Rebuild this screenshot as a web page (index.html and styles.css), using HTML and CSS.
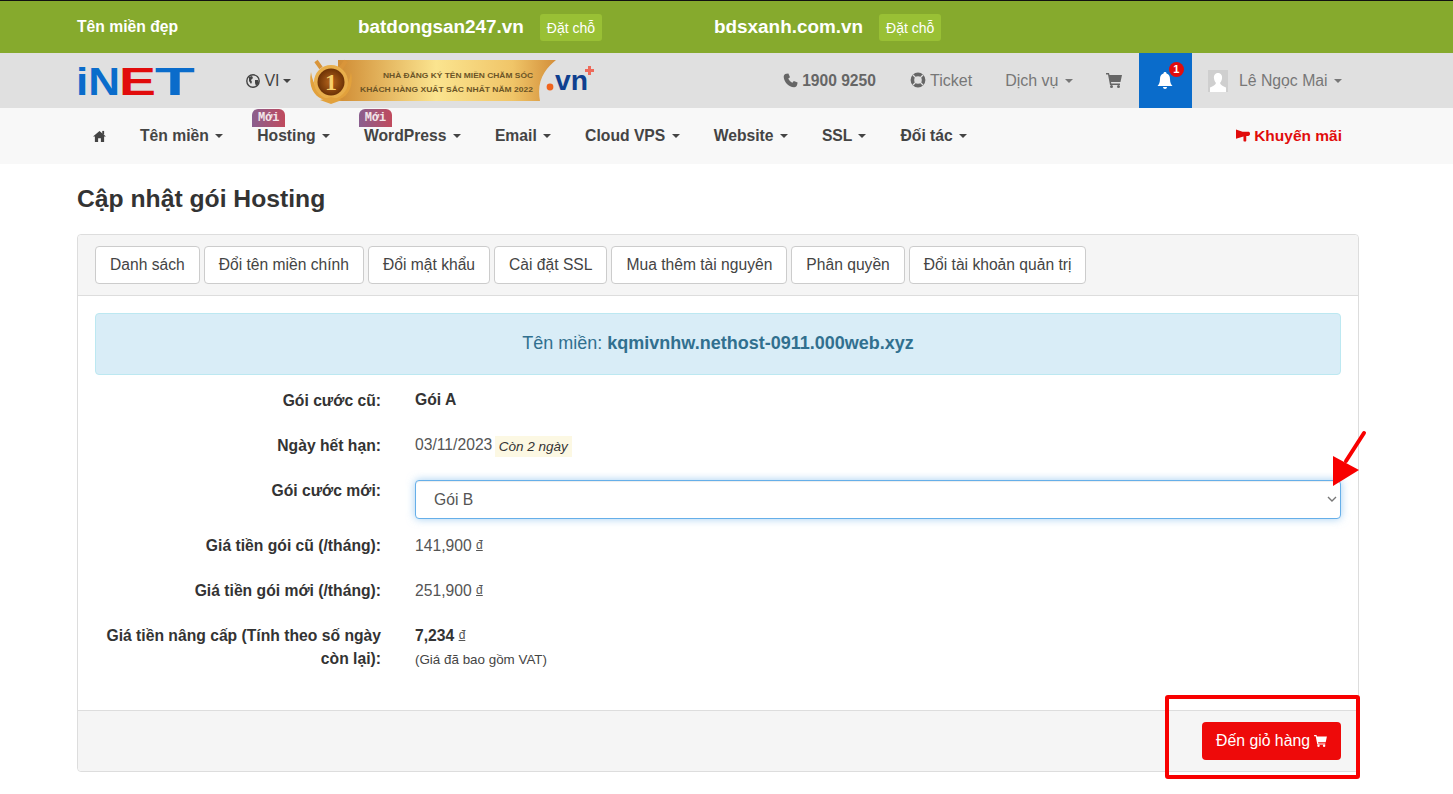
FILE: index.html
```html
<!DOCTYPE html>
<html lang="vi">
<head>
    <meta charset="UTF-8" />
    <meta name="viewport" content="width=device-width, initial-scale=1.0"/>
    <title>Cập nhật gói Hosting</title>
    <link rel="stylesheet" href="styles.css">
</head>
<body>

<!-- Thanh tên miền đẹp -->
<div class="promo-bar">
    <div class="promo-title">Tên miền đẹp</div>
    <div class="promo-item">
        <span class="promo-domain">batdongsan247.vn</span>
        <a class="promo-btn">Đặt chỗ</a>
    </div>
    <div class="promo-item">
        <span class="promo-domain">bdsxanh.com.vn</span>
        <a class="promo-btn">Đặt chỗ</a>
    </div>
</div>

<!-- Thanh logo -->
<div class="top-bar">
    <svg class="logo" width="120" height="46" viewBox="0 0 120 46">
        <text x="-1" y="37" font-family="Liberation Sans" font-weight="700" font-size="39" textLength="44" lengthAdjust="spacingAndGlyphs" fill="#0a6ccb">iN</text>
        <text x="42" y="37" font-family="Liberation Sans" font-weight="700" font-size="39" textLength="37" lengthAdjust="spacingAndGlyphs" fill="#e10c0c">E</text>
        <text x="78" y="37" font-family="Liberation Sans" font-weight="700" font-size="39" textLength="40" lengthAdjust="spacingAndGlyphs" fill="#0a6ccb">T</text>
    </svg>

    <a class="lang">
        <svg class="ico" width="14" height="14" viewBox="0 0 14 14">
            <circle cx="7" cy="7" r="6.2" fill="none" stroke="#444" stroke-width="1.4"/>
            <path d="M3 3l3-1 1 2-2 2 1 2-1 2-2-3zM9 6l3 0 1 3-3 3-1-3z" fill="#444"/>
        </svg>
        VI <span class="caret"></span>
    </a>

    <svg class="banner" width="288" height="46" viewBox="0 0 288 46">
        <defs>
            <linearGradient id="ribbon" x1="0" y1="0" x2="1" y2="0">
                <stop offset="0" stop-color="#d08c34"/>
                <stop offset="0.45" stop-color="#fbe48f"/>
                <stop offset="0.8" stop-color="#f0c568"/>
                <stop offset="1" stop-color="#d38f3a"/>
            </linearGradient>
            <radialGradient id="medal">
                <stop offset="0" stop-color="#b8661c"/>
                <stop offset="1" stop-color="#6c3206"/>
            </radialGradient>
        </defs>
        <path d="M30 2H248C238 10 228 22 232 43H30Z" fill="url(#ribbon)"/>
        <path d="M3 14C0 28 6 38 14 41L32 41C40 38 46 28 43 14C41 28 34 37 23 37C12 37 5 28 3 14Z" fill="#e2a13c"/>
        <path d="M8 3L13 10M38 3L33 10" stroke="#d9953a" stroke-width="4"/>
        <circle cx="23" cy="24" r="17" fill="#e8ae4b"/>
        <circle cx="23" cy="24" r="13.5" fill="url(#medal)"/>
        <text x="23" y="32" text-anchor="middle" font-family="Liberation Serif" font-weight="700" font-size="24" fill="#f7cf6b">1</text>
        <path d="M12 42L23 46L34 42L23 39Z" fill="#e2a13c"/>
        <text x="225" y="20" text-anchor="end" font-family="Liberation Sans" font-weight="700" font-size="8" textLength="150" lengthAdjust="spacingAndGlyphs" fill="#6b5426">NHÀ ĐĂNG KÝ TÊN MIỀN CHĂM SÓC</text>
        <text x="225" y="34" text-anchor="end" font-family="Liberation Sans" font-weight="700" font-size="8" textLength="173" lengthAdjust="spacingAndGlyphs" fill="#6b5426">KHÁCH HÀNG XUẤT SẮC NHẤT NĂM 2022</text>
        <circle cx="242" cy="29" r="3.4" fill="#f0641e"/>
        <text x="247" y="32" font-family="Liberation Sans" font-weight="700" font-size="27" textLength="33" lengthAdjust="spacingAndGlyphs" fill="#0f3f8f">vn</text>
        <path d="M280 8h3v3h3v3h-3v3h-3v-3h-3v-3h3z" fill="#ee6a5a"/>
    </svg>

    <div class="top-right">
        <a class="top-link phone">
            <svg class="ico" width="15" height="15" viewBox="0 0 15 15">
                <path d="M3.4 .8L5.4 .4L7 4.2L5.3 5.6C6 7.4 7.6 9 9.4 9.7L10.8 8L14.6 9.6L14.2 11.6C14 13.2 12.6 14.4 11 14.3C5.6 13.8 1.2 9.4 .7 4C.6 2.4 1.8 1 3.4 .8Z" fill="#666"/>
            </svg>
            1900 9250
        </a>
        <a class="top-link ticket">
            <svg class="ico" width="16" height="16" viewBox="0 0 16 16">
                <circle cx="8" cy="8" r="5.6" fill="none" stroke="#666" stroke-width="3.6"/>
                <path d="M3 3l3 3M13 3l-3 3M3 13l3-3M13 13l-3-3" stroke="#e0e0e0" stroke-width="1.2"/>
            </svg>
            Ticket
        </a>
        <a class="top-link service">Dịch vụ <span class="caret"></span></a>
        <a class="top-link cart">
            <svg width="16" height="15" viewBox="0 0 16 15">
                <path d="M0 0H3L3.5 2H16L14.5 9H5L5.3 10.5H14V12H4L2 1.5H0Z" fill="#666"/>
                <circle cx="5.5" cy="13.5" r="1.5" fill="#666"/>
                <circle cx="12.5" cy="13.5" r="1.5" fill="#666"/>
            </svg>
        </a>
        <a class="bell">
            <svg width="16" height="18" viewBox="0 0 16 18">
                <path d="M8 0C9 0 9.5 .6 9.5 1.4C12 2 13 4 13 7C13 10.5 14 12.5 15.5 14H.5C2 12.5 3 10.5 3 7C3 4 4 2 6.5 1.4C6.5 .6 7 0 8 0ZM6 15H10C10 16.2 9 17 8 17C7 17 6 16.2 6 15Z" fill="#fff"/>
            </svg>
            <span class="bell-count">1</span>
        </a>
        <a class="top-link user">
            <svg class="avatar" width="20" height="22" viewBox="0 0 20 22">
                <rect width="20" height="22" fill="#cfcfcf"/>
                <path d="M10 3C13 3 14.5 5.5 14 8.5C13.7 10.5 12.8 12 12 13C12.4 15 15 16 18 17.5V22H2V17.5C5 16 7.6 15 8 13C7.2 12 6.3 10.5 6 8.5C5.5 5.5 7 3 10 3Z" fill="#fff"/>
            </svg>
            <span>Lê Ngọc Mai <span class="caret"></span></span>
        </a>
    </div>
</div>

<!-- Menu chính -->
<div class="main-nav">
    <a class="nav-home">
        <svg width="13" height="12" viewBox="0 0 14 13">
            <path d="M7 1L14 7H12V13H8.5V9H5.5V13H2V7H0Z" fill="#444"/>
            <rect x="10" y="1" width="2" height="4" fill="#444"/>
        </svg>
    </a>
    <a class="nav-item">Tên miền <span class="caret"></span></a>
    <a class="nav-item"><span class="badge-new">Mới</span>Hosting <span class="caret"></span></a>
    <a class="nav-item"><span class="badge-new">Mới</span>WordPress <span class="caret"></span></a>
    <a class="nav-item">Email <span class="caret"></span></a>
    <a class="nav-item">Cloud VPS <span class="caret"></span></a>
    <a class="nav-item">Website <span class="caret"></span></a>
    <a class="nav-item">SSL <span class="caret"></span></a>
    <a class="nav-item">Đối tác <span class="caret"></span></a>
    <a class="nav-promo">
        <svg class="ico" width="14" height="14" viewBox="0 0 15 14">
            <path d="M0 0V10L8 7.6V12C8 13.2 11 13.2 11 12V7H13C14.2 7 15 6 15 4.6C15 3 14.2 2.4 13 2.4H7Z" fill="#e10c0c"/>
        </svg>
        Khuyến mãi
    </a>
</div>

<div class="container">
    <h1 class="page-title">Cập nhật gói Hosting</h1>

    <div class="panel">
        <div class="panel-heading">
            <a class="tab-btn">Danh sách</a>
            <a class="tab-btn">Đổi tên miền chính</a>
            <a class="tab-btn">Đổi mật khẩu</a>
            <a class="tab-btn">Cài đặt SSL</a>
            <a class="tab-btn">Mua thêm tài nguyên</a>
            <a class="tab-btn">Phân quyền</a>
            <a class="tab-btn">Đổi tài khoản quản trị</a>
        </div>

        <div class="panel-body">
            <div class="alert-info">Tên miền: <strong>kqmivnhw.nethost-0911.000web.xyz</strong></div>

            <div class="form-row">
                <div class="form-label">Gói cước cũ:</div>
                <div class="form-value"><strong>Gói A</strong></div>
            </div>
            <div class="form-row">
                <div class="form-label">Ngày hết hạn:</div>
                <div class="form-value">03/11/2023 <em class="days-left">Còn 2 ngày</em></div>
            </div>
            <div class="form-row row-select">
                <div class="form-label">Gói cước mới:</div>
                <div class="form-value select-wrap">
                    <select class="form-select">
                        <option>Gói B</option>
                    </select>
                    <svg class="select-arrow" width="10" height="6" viewBox="0 0 10 6">
                        <path d="M1 1L5 5L9 1" fill="none" stroke="#777" stroke-width="1.4"/>
                    </svg>
                </div>
            </div>
            <div class="form-row">
                <div class="form-label">Giá tiền gói cũ (/tháng):</div>
                <div class="form-value">141,900 <span class="currency">đ</span></div>
            </div>
            <div class="form-row">
                <div class="form-label">Giá tiền gói mới (/tháng):</div>
                <div class="form-value">251,900 <span class="currency">đ</span></div>
            </div>
            <div class="form-row row-last">
                <div class="form-label">Giá tiền nâng cấp (Tính theo số ngày còn lại):</div>
                <div class="form-value">
                    <strong>7,234</strong> <span class="currency">đ</span>
                    <div class="vat-note">(Giá đã bao gồm VAT)</div>
                </div>
            </div>
        </div>

        <div class="panel-footer">
            <a class="btn-cart">
                Đến giỏ hàng
                <svg width="13" height="12" viewBox="0 0 16 15">
                    <path d="M0 0H3L3.5 2H16L14.5 9H5L5.3 10.5H14V12H4L2 1.5H0Z" fill="#fff"/>
                    <circle cx="5.5" cy="13.5" r="1.5" fill="#fff"/>
                    <circle cx="12.5" cy="13.5" r="1.5" fill="#fff"/>
                </svg>
            </a>
        </div>
    </div>
</div>

<!-- Chú thích đỏ vẽ đè lên ảnh chụp -->
<svg class="mark-arrow" width="40" height="60" viewBox="0 0 40 60">
    <path d="M35 3L17 31" stroke="#f80000" stroke-width="4" stroke-linecap="round"/>
    <path d="M4 26L30 40L4 56Z" fill="#f80000"/>
</svg>
<div class="mark-box"></div>

</body>
</html>
```

FILE: styles.css
```css
html, body {
    margin: 0;
    padding: 0;
}

body {
    position: relative;
    height: 794px;
    overflow: hidden;
    font-family: "Liberation Sans", Arial, sans-serif;
    font-size: 14px;
    line-height: 20px;
    color: #333;
    background: #fff;
}

.caret {
    display: inline-block;
    width: 0;
    height: 0;
    margin-left: 2px;
    vertical-align: middle;
    border-top: 4px solid;
    border-left: 4px solid transparent;
    border-right: 4px solid transparent;
}

.ico {
    vertical-align: -2px;
}

/* Thanh tên miền đẹp */
.promo-bar {
    display: flex;
    align-items: center;
    height: 51px;
    padding: 0 0 1px 77px;
    background: #86aa2d;
    border-top: 1px solid #111;
    color: #fff;
}

.promo-title {
    width: 281px;
    font-size: 15.7px;
    font-weight: 700;
}

.promo-item {
    display: flex;
    align-items: center;
    gap: 16px;
    width: 356px;
}

.promo-domain {
    font-size: 18.9px;
    font-weight: 700;
}

.promo-btn {
    margin-top: 1px;
    padding: 4px 7px 3px;
    font-size: 14px;
    border-radius: 3px;
    background: #99c035;
}

/* Thanh logo */
.top-bar {
    display: flex;
    align-items: center;
    height: 55px;
    padding: 0 111px 0 77px;
    background: #e0e0e0;
    color: #777;
    font-size: 16px;
}

.lang {
    margin-left: 49px;
    color: #444;
}

.lang .caret {
    margin-left: -1px;
}

.banner {
    margin-left: 17px;
}

.top-right {
    display: flex;
    align-items: center;
    height: 100%;
    margin-left: auto;
}

.top-link {
    white-space: nowrap;
}

.phone {
    font-size: 15.6px;
    font-weight: 700;
    color: #666;
    margin-right: 34px;
}

.ticket {
    margin-right: 33px;
}

.service {
    margin-right: 33px;
}

.cart {
    display: flex;
    margin-right: 17px;
}

.bell {
    position: relative;
    display: flex;
    align-items: center;
    justify-content: center;
    width: 53px;
    height: 100%;
    background: #0a6ccb;
}

.bell-count {
    position: absolute;
    top: 9px;
    left: 30px;
    width: 15px;
    height: 15px;
    line-height: 15px;
    border-radius: 50%;
    background: #e10c0c;
    color: #fff;
    font-size: 11px;
    font-weight: 700;
    text-align: center;
}

.user {
    display: flex;
    align-items: center;
    gap: 11px;
    margin-left: 16px;
    font-size: 15.8px;
}

/* Menu chính */
.main-nav {
    display: flex;
    align-items: center;
    height: 56px;
    padding: 0 111px 1px 93px;
    box-sizing: border-box;
    background: #f8f8f8;
    color: #444;
    font-size: 15.7px;
    font-weight: 700;
}

.nav-home {
    display: flex;
    margin-right: 34px;
}

.nav-item {
    position: relative;
    margin-right: 34px;
    white-space: nowrap;
}

.badge-new {
    position: absolute;
    top: -17px;
    left: -5px;
    width: 33px;
    height: 18px;
    border-radius: 6px 6px 0 0;
    background: linear-gradient(90deg, #8a5f8f, #c04a5d);
    color: #f3e6ea;
    font-family: "Liberation Mono", monospace;
    font-size: 12px;
    line-height: 19px;
    font-weight: 700;
    text-align: center;
}

.nav-promo {
    margin-left: auto;
    color: #e10c0c;
    font-size: 15.5px;
}

/* Nội dung */
.container {
    margin: 0 94px 0 77px;
}

.page-title {
    margin: 0;
    padding: 20px 0 21px;
    font-size: 24.7px;
    line-height: 29px;
    font-weight: 700;
}

.panel {
    border: 1px solid #ddd;
    border-radius: 4px;
}

.panel-heading {
    display: flex;
    gap: 4px;
    height: 61px;
    padding: 11px 17px;
    box-sizing: border-box;
    background: #f5f5f5;
    border-bottom: 1px solid #ddd;
    border-radius: 4px 4px 0 0;
}

.tab-btn {
    height: 38px;
    padding: 0 14px;
    box-sizing: border-box;
    border: 1px solid #ccc;
    border-radius: 4px;
    background: #fff;
    color: #444;
    font-size: 15.63px;
    line-height: 36px;
    white-space: nowrap;
}

.panel-body {
    height: 397px;
    padding: 17px 17px 0;
}

.alert-info {
    height: 62px;
    margin-bottom: 15px;
    box-sizing: border-box;
    border: 1px solid #bce8f1;
    border-radius: 4px;
    background: #d9edf7;
    color: #31708f;
    font-size: 18px;
    line-height: 58px;
    text-align: center;
}

.form-row {
    display: flex;
    height: 30px;
    margin-bottom: 15px;
    font-size: 15.7px;
}

.row-select {
    height: 39px;
    margin-bottom: 16px;
}

.row-last {
    height: auto;
    margin-bottom: 0;
}

.form-label {
    width: 320px;
    margin-top: -1px;
    padding-right: 34px;
    box-sizing: border-box;
    font-weight: 700;
    text-align: right;
    line-height: 23px;
}

.form-value {
    flex: 1;
    line-height: 20px;
    color: #555;
}

.form-value strong {
    color: #333;
}

.days-left {
    position: relative;
    top: 1px;
    margin-left: -2px;
    padding: 3px 4px;
    background: #fcf8e3;
    color: #333;
    font-size: 13.5px;
}

.select-wrap {
    position: relative;
}

.form-select {
    display: block;
    width: 100%;
    height: 39px;
    padding-left: 18px;
    border: 1px solid #66afe9;
    border-radius: 4px;
    background: #fff;
    color: #555;
    font-family: inherit;
    font-size: 15.7px;
    appearance: none;
    box-shadow: inset 0 1px 1px rgba(0,0,0,.075), 0 0 8px rgba(102,175,233,.6);
}

.select-arrow {
    position: absolute;
    top: 16px;
    right: 4px;
}

.currency {
    font-size: 12px;
    text-decoration: underline;
    vertical-align: 2px;
}

.vat-note {
    margin-top: 4px;
    font-size: 13.4px;
    color: #444;
}

.panel-footer {
    display: flex;
    justify-content: flex-end;
    align-items: center;
    height: 61px;
    padding-right: 17px;
    background: #f5f5f5;
    border-top: 1px solid #ddd;
    box-sizing: border-box;
    border-radius: 0 0 4px 4px;
}

.btn-cart {
    display: flex;
    align-items: center;
    gap: 4px;
    height: 38px;
    padding: 0 14px;
    box-sizing: border-box;
    border-radius: 4px;
    background: #ee0a0a;
    color: #fff;
    font-size: 15.8px;
}

/* Chú thích đỏ */
.mark-arrow {
    position: absolute;
    top: 430px;
    left: 1329px;
}

.mark-box {
    position: absolute;
    top: 695px;
    left: 1165px;
    width: 187px;
    height: 76px;
    border: 4px solid #f80000;
    border-radius: 3px;
}
```
